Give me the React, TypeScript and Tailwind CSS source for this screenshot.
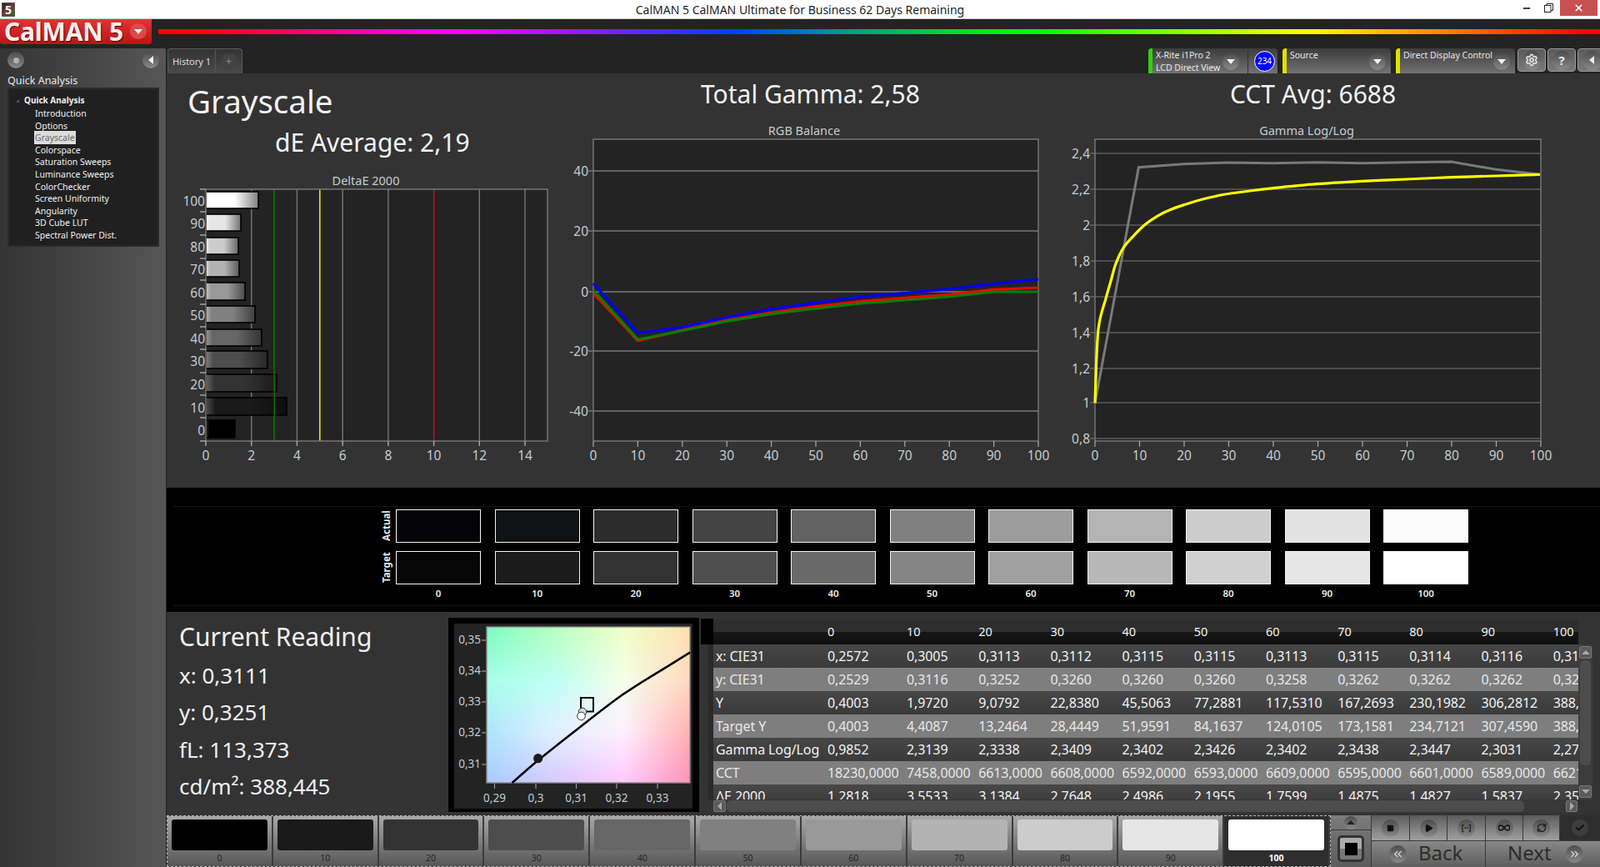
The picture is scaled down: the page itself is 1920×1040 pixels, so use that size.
import React, { ReactNode } from "react";
import { Check, ChevronsLeft, ChevronsRight, Minus, Play, RefreshCw, Settings, Square, X } from "lucide-react";

const levels = [0, 10, 20, 30, 40, 50, 60, 70, 80, 90, 100];
const fullGray = ["#000000", "#1a1a1a", "#333333", "#4d4d4d", "#666666", "#808080", "#999999", "#b3b3b3", "#cccccc", "#e6e6e6", "#ffffff"];
const actual = ["#040406", "#111214", "#2c2c2c", "#444444", "#626262", "#808080", "#9c9c9c", "#b4b4b4", "#cdcdcd", "#e2e2e2", "#fbfbfb"];
const target = ["#060606", "#1c1c1c", "#333333", "#4f4f4f", "#6a6a6a", "#848484", "#a0a0a0", "#b8b8b8", "#d0d0d0", "#e6e6e6", "#ffffff"];

const treeItems = ["Introduction", "Options", "Grayscale", "Colorspace", "Saturation Sweeps", "Luminance Sweeps", "ColorChecker", "Screen Uniformity", "Angularity", "3D Cube LUT", "Spectral Power Dist."];

const tableRows = [
	["x: CIE31", "0,2572", "0,3005", "0,3113", "0,3112", "0,3115", "0,3115", "0,3113", "0,3115", "0,3114", "0,3116", "0,3111"],
	["y: CIE31", "0,2529", "0,3116", "0,3252", "0,3260", "0,3260", "0,3260", "0,3258", "0,3262", "0,3262", "0,3262", "0,3251"],
	["Y", "0,4003", "1,9720", "9,0792", "22,8380", "45,5063", "77,2881", "117,5310", "167,2693", "230,1982", "306,2812", "388,4450"],
	["Target Y", "0,4003", "4,4087", "13,2464", "28,4449", "51,9591", "84,1637", "124,0105", "173,1581", "234,7121", "307,4590", "388,4450"],
	["Gamma Log/Log", "0,9852", "2,3139", "2,3338", "2,3409", "2,3402", "2,3426", "2,3402", "2,3438", "2,3447", "2,3031", "2,2765"],
	["CCT", "18230,0000", "7458,0000", "6613,0000", "6608,0000", "6592,0000", "6593,0000", "6609,0000", "6595,0000", "6601,0000", "6589,0000", "6621,0000"],
	["ΔE 2000", "1,2818", "3,5533", "3,1384", "2,7648", "2,4986", "2,1955", "1,7599", "1,4875", "1,4827", "1,5837", "2,3500"],
];

// bar end x and top/bottom in page px, from 100 down to 0
const deltaBars = [
	[310, 230, 250],
	[289, 257, 277],
	[286, 285, 305],
	[287, 312, 332],
	[294, 339, 360],
	[306, 367, 387],
	[314, 395, 415],
	[321, 421, 442],
	[332, 449, 470],
	[344, 477, 498],
	[282, 504, 525],
];

const labelFill = "#c4ccd0";

const mix = (hex: string, k: number, add = 0) => {
	const v = parseInt(hex.slice(1, 3), 16);
	const n = Math.min(255, Math.round(v * k + add));
	return `rgb(${n},${n},${n})`;
};

// catmull-rom through the points, so curves read by eye don't show kinks
const smooth = (p: number[][]) => {
	let d = `M${p[0][0]} ${p[0][1]}`;
	for (let i = 0; i < p.length - 1; i++) {
		const a = p[Math.max(0, i - 1)];
		const b = p[i];
		const c = p[i + 1];
		const e = p[Math.min(p.length - 1, i + 2)];
		const c1 = [b[0] + (c[0] - a[0]) / 6, b[1] + (c[1] - a[1]) / 6];
		const c2 = [c[0] - (e[0] - b[0]) / 6, c[1] - (e[1] - b[1]) / 6];
		d += `C${c1[0].toFixed(1)} ${c1[1].toFixed(1)} ${c2[0].toFixed(1)} ${c2[1].toFixed(1)} ${c[0].toFixed(1)} ${c[1].toFixed(1)}`;
	}
	return d;
};

function DeltaChart() {
	const xAt = (v: number) => 247 + v * 27.36;
	const tickY = [227, 254, 282, 310, 336, 365, 392, 419, 447, 474, 501, 529];
	return (
		<svg className="absolute left-[200px] top-[200px]" width={480} height={370} viewBox="200 200 480 370">
			<defs>
				{fullGray.map((c, i) => (
					<linearGradient key={i} id={`bar${i}`} x1="0" x2="1" y1="0" y2="0">
						<stop offset="0" stopColor={mix(c, 1, 50)} />
						<stop offset="0.12" stopColor={c} />
						<stop offset="0.55" stopColor={c} />
						<stop offset="1" stopColor={mix(c, 0.5)} />
					</linearGradient>
				))}
			</defs>
			<text x="439" y="222" textAnchor="middle" fontSize="14.5" fill={labelFill}>DeltaE 2000</text>
			<rect x="247" y="227" width="410" height="302" fill="#232323" />
			{[2, 4, 6, 8, 12, 14].map((v) => (
				<line key={v} x1={xAt(v)} x2={xAt(v)} y1="227" y2="529" stroke="#777" strokeWidth="1.4" />
			))}
			{deltaBars.map((b, i) => (
				<rect key={i} x="247" y={b[1]} width={b[0] - 247} height={b[2] - b[1]} fill={`url(#bar${10 - i})`} stroke="#000" strokeWidth="1.6" />
			))}
			<line x1={xAt(3)} x2={xAt(3)} y1="227" y2="529" stroke="#008000" strokeWidth="1.4" />
			<line x1={xAt(5)} x2={xAt(5)} y1="227" y2="529" stroke="#ffff00" strokeWidth="1.4" />
			<line x1={xAt(10)} x2={xAt(10)} y1="227" y2="529" stroke="#ff0000" strokeWidth="1.4" />
			<rect x="247" y="227" width="410" height="302" fill="none" stroke="#7a7a7a" strokeWidth="1.4" />
			{tickY.map((y) => (
				<line key={y} x1="240" x2="247" y1={y} y2={y} stroke="#aaa" strokeWidth="1.4" />
			))}
			{[100, 90, 80, 70, 60, 50, 40, 30, 20, 10, 0].map((v, i) => (
				<text key={v} x="246" y={(deltaBars[i][1] + deltaBars[i][2]) / 2 + 7} textAnchor="end" fontSize="15.5" fill={labelFill}>{v}</text>
			))}
			{[0, 2, 4, 6, 8, 10, 12, 14].map((v) => (
				<g key={v}>
					<line x1={xAt(v)} x2={xAt(v)} y1="529" y2="535" stroke="#aaa" strokeWidth="1.4" />
					<text x={xAt(v)} y="552" textAnchor="middle" fontSize="15.5" fill={labelFill}>{v}</text>
				</g>
			))}
		</svg>
	);
}

function XAxis100({ left, right }: { left: number; right: number }) {
	const step = (right - left) / 10;
	return (
		<>
			{levels.map((v, i) => (
				<g key={v}>
					<line x1={left + i * step} x2={left + i * step} y1="529" y2="536" stroke="#aaa" strokeWidth="1.2" />
					<text x={left + i * step} y="552" textAnchor="middle" fontSize="15.5" fill={labelFill}>{v}</text>
				</g>
			))}
		</>
	);
}

function BalanceChart() {
	const line = (pts: number[]) =>
		pts.map((z, i) => `${712 + (i * 534) / 10},${(150 + z / 3).toFixed(1)}`).join(" ");
	const grid: [number, string][] = [[205, "40"], [277, "20"], [350, "0"], [421, "-20"], [493, "-40"]];
	return (
		<svg className="absolute left-[680px] top-[140px]" width={600} height={430} viewBox="680 140 600 430">
			<text x="965" y="162" textAnchor="middle" fontSize="14.5" fill={labelFill}>RGB Balance</text>
			<rect x="712" y="167" width="534" height="362" fill="#232323" stroke="#7a7a7a" strokeWidth="1.4" />
			{grid.map(([y, t]) => (
				<g key={t}>
					<line x1="706" x2="1246" y1={y} y2={y} stroke="#7a7a7a" strokeWidth="1.4" />
					<text x="706" y={y + 6} textAnchor="end" fontSize="15.5" fill={labelFill}>{t}</text>
				</g>
			))}
			<polyline points={line([605, 776, 738, 703, 675, 653, 635, 622, 610, 592, 585])} fill="none" stroke="#ff0000" strokeWidth="3.2" />
			<polyline points={line([595, 772, 740, 706, 680, 660, 642, 630, 618, 600, 600])} fill="none" stroke="#008000" strokeWidth="3.2" />
			<polyline points={line([570, 748, 728, 692, 662, 640, 618, 605, 590, 572, 555])} fill="none" stroke="#0000ff" strokeWidth="3.2" />
			<XAxis100 left={712} right={1246} />
		</svg>
	);
}

function GammaChart() {
	const toPage = (pts: number[][]) =>
		pts.map(([x, y]) => [1270 + x / 2.613, 150 + y / 3]);
	const grid: [number, string][] = [[184, "2,4"], [227, "2,2"], [270, "2"], [313, "1,8"], [356, "1,6"], [399, "1,4"], [442, "1,2"], [483, "1"], [526, "0,8"]];
	const gray = [[115, 1000], [252, 152], [393, 140], [533, 135], [673, 137], [812, 134], [952, 137], [1092, 134], [1232, 132], [1372, 160], [1510, 178]];
	const yellow = [[115, 1000], [125, 740], [150, 620], [165, 560], [180, 500], [205, 440], [235, 400], [270, 360], [310, 328], [350, 305], [400, 285], [450, 268], [520, 250], [600, 237], [673, 227], [810, 212], [950, 202], [1092, 195], [1232, 188], [1372, 183], [1510, 178]];
	return (
		<svg className="absolute left-[1270px] top-[140px]" width={620} height={430} viewBox="1270 140 620 430">
			<text x="1568" y="162" textAnchor="middle" fontSize="14.5" fill={labelFill}>Gamma Log/Log</text>
			<rect x="1314" y="167" width="535" height="362" fill="#232323" stroke="#7a7a7a" strokeWidth="1.4" />
			{grid.map(([y, t]) => (
				<g key={t}>
					<line x1="1308" x2="1849" y1={y} y2={y} stroke="#7a7a7a" strokeWidth="1.2" />
					<text x="1308" y={y + 6} textAnchor="end" fontSize="15.5" fill={labelFill}>{t}</text>
				</g>
			))}
			<polyline points={toPage(gray).map((p) => p.map((n) => n.toFixed(1)).join(",")).join(" ")} fill="none" stroke="#7a7a7a" strokeWidth="3" />
			<path d={smooth(toPage(yellow))} fill="none" stroke="#ffff00" strokeWidth="3.2" />
			<XAxis100 left={1314} right={1849} />
		</svg>
	);
}

// colour field of the CIE plot, bilinear between hand picked control points
const cie = [
	[[125, 252, 192], [184, 255, 192], [240, 255, 200], [255, 224, 176]],
	[[170, 255, 232], [190, 255, 245], [245, 255, 232], [255, 216, 192]],
	[[176, 228, 255], [226, 240, 255], [255, 240, 255], [255, 176, 176]],
	[[168, 204, 255], [216, 200, 255], [255, 200, 255], [255, 144, 184]],
];

const cieAt = (u: number, v: number) => {
	const fx = u * 3;
	const fy = v * 3;
	const ix = Math.min(2, Math.floor(fx));
	const iy = Math.min(2, Math.floor(fy));
	const tx = fx - ix;
	const ty = fy - iy;
	const ch = [0, 1, 2].map((k) =>
		Math.round(
			cie[iy][ix][k] * (1 - tx) * (1 - ty) + cie[iy][ix + 1][k] * tx * (1 - ty) + cie[iy + 1][ix][k] * (1 - tx) * ty + cie[iy + 1][ix + 1][k] * tx * ty,
		),
	);
	return `rgb(${ch.join(",")})`;
};

function CiePlot() {
	const cells: ReactNode[] = [];
	for (let y = 0; y < 187; y += 3) {
		for (let x = 0; x < 244; x += 3) {
			cells.push(<rect key={`${x}-${y}`} x={584 + x} y={752 + y} width={Math.min(3.4, 244 - x)} height={Math.min(3.4, 187 - y)} fill={cieAt(x / 244, y / 187)} />);
		}
	}
	const yTicks: [number, string][] = [[768, "0,35"], [805, "0,34"], [842, "0,33"], [879, "0,32"], [917, "0,31"]];
	const xTicks: [number, string][] = [[593.5, "0,29"], [643, "0,3"], [691.6, "0,31"], [740, "0,32"], [789, "0,33"]];
	const locus = [[614.6, 939], [646.1, 911.7], [696.6, 871.7], [747.1, 833.3], [789.2, 806.7], [828, 782.7]];
	return (
		<div className="absolute left-[538px] top-[741px] h-[233px] w-[301px] bg-black">
			<svg className="absolute left-0 top-0" width={301} height={233} viewBox="538 741 301 233">
				<rect x="545" y="748" width="286" height="222" fill="#232323" />
				{cells}
				<rect x="584" y="752" width="244" height="187" fill="none" stroke="#8a8a8a" strokeWidth="1.4" />
				{yTicks.map(([y, t]) => (
					<g key={t}>
						<line x1="578" x2="583" y1={y} y2={y} stroke="#aaa" />
						<text x="577" y={y + 4} textAnchor="end" fontSize="13.5" fill={labelFill}>{t}</text>
					</g>
				))}
				{xTicks.map(([x, t]) => (
					<g key={t}>
						<line x1={x} x2={x} y1="940" y2="946" stroke="#aaa" />
						<text x={x} y="962" textAnchor="middle" fontSize="13.5" fill={labelFill}>{t}</text>
					</g>
				))}
				<path d={smooth(locus)} fill="none" stroke="#000" strokeWidth="2.6" />
				<circle cx="645.7" cy="909.7" r="5.6" fill="#1c1c1c" />
				<rect x="697" y="837" width="15" height="16.5" fill="none" stroke="#000" strokeWidth="2" />
				<circle cx="699" cy="854" r="4.8" fill="#d8d8d8" stroke="#333" />
				<circle cx="697.5" cy="859" r="4.8" fill="#fff" stroke="#333" />
			</svg>
		</div>
	);
}

function Knob({ size = "h-[21px] w-[21px]", children }: { size?: string; children?: ReactNode }) {
	return (
		<div className={`flex items-center justify-center rounded-full bg-[linear-gradient(180deg,#4c4c4c,#8a8a8a)] text-[#d8d8d8] ${size}`}>
			{children}
		</div>
	);
}

function DownTri() {
	return (
		<svg width="10" height="6" viewBox="0 0 10 6">
			<path d="M0 0h10L5 6z" fill="#f2f2f2" />
		</svg>
	);
}

function Selector({ left, width, color, lines, knobAt }: { left: string; width: string; color: string; lines: string[]; knobAt: string }) {
	return (
		<div className={`absolute top-[58px] h-[30px] rounded-t-[4px] bg-[linear-gradient(180deg,#3c3c3c,#727272)] ${left} ${width}`}>
			<div className={`absolute bottom-0 left-0 top-0 w-[5px] rounded-tl-[4px] ${color}`} />
			<div className="absolute left-[9px] top-[1px] whitespace-nowrap text-[10.5px] leading-[14.5px] text-[#e8e8e8]">
				{lines.map((l) => (
					<div key={l}>{l}</div>
				))}
			</div>
			<div className={`absolute top-[6px] ${knobAt}`}>
				<Knob size="h-[20px] w-[20px]"><DownTri /></Knob>
			</div>
		</div>
	);
}

function Square3D({ left, children }: { left: string; children: ReactNode }) {
	return (
		<div className={`absolute top-[58px] flex h-[28px] w-[34px] items-center justify-center rounded-[4px] border border-[#9a9a9a] bg-[linear-gradient(180deg,#5a5a5a,#7a7a7a)] ${left}`}>
			<Knob size="h-[23px] w-[23px]">{children}</Knob>
		</div>
	);
}

function Header() {
	return (
		<>
			<div className="relative flex h-[23px] items-center justify-center border-b border-[#c8c8c8] bg-white">
				<div className="absolute left-[2px] top-[3px] flex h-[17px] w-[16px] items-center justify-center border border-[#555] bg-[linear-gradient(135deg,#222,#733,#272)] text-[14px] font-bold leading-none text-white">5</div>
				<span className="text-[14px] text-[#222]">CalMAN 5 CalMAN Ultimate for Business 62 Days Remaining</span>
				<Minus className="absolute left-[1826px] top-[4px] text-black" size={12} strokeWidth={3} />
				<svg className="absolute left-[1853px] top-[4px]" width="11" height="11" viewBox="0 0 11 11" fill="none" stroke="#222">
					<rect x="0.5" y="2.5" width="7.5" height="8" />
					<path d="M3 2.5V0.5h7.5v8H8" />
				</svg>
				<div className="absolute left-[1872px] top-0 flex h-[19px] w-[45px] items-center justify-center bg-[#c75050]">
					<X className="text-white" size={13} strokeWidth={3} />
				</div>
			</div>
			<div className="absolute left-0 top-[23px] flex h-[30px] w-[182px] items-center rounded-b-[3px] bg-[linear-gradient(180deg,#e23434,#bb1414)] pl-[5px]">
				<span className="font-['Liberation_Sans',sans-serif] text-[30px] font-bold leading-none tracking-[-0.2px] text-[#f4f0f0] [text-shadow:1px_1px_1px_#5a0000]">CalMAN 5</span>
				<div className="absolute left-[156px] top-[5px] flex h-[19px] w-[20px] items-center justify-center rounded-full bg-[#e04848]">
					<DownTri />
				</div>
			</div>
			<div className="absolute left-[190px] top-[35px] h-[6px] w-[1730px] bg-[linear-gradient(90deg,#ff0000_2%,#ff00ff_20.4%,#0040ff_40.2%,#00a080_48%,#00ff00_60.6%,#ffff00_79.7%,#ff0000_99%)]" />
		</>
	);
}

function Sidebar() {
	return (
		<div className="absolute left-0 top-[58px] h-[982px] w-[200px] rounded-tr-[3px] border-r border-[#222] bg-[linear-gradient(90deg,#343434,#565656)]">
			<div className="absolute left-[9px] top-[4px]">
				<Knob size="h-[20px] w-[20px]"><div className="h-[7px] w-[7px] rounded-full bg-[#b0b0b0]" /></Knob>
			</div>
			<div className="absolute left-[171px] top-[4px]">
				<Knob size="h-[20px] w-[20px]">
					<svg width="6" height="10" viewBox="0 0 6 10"><path d="M6 0v10L0 5z" fill="#f2f2f2" /></svg>
				</Knob>
			</div>
			<div className="absolute left-[9px] top-[30px] text-[12.5px] leading-[18px] text-[#e8e8e8]">Quick Analysis</div>
			<div className="absolute left-[9px] top-[47px] h-[191px] w-[182px] border-2 border-[#2a2a2a] bg-[#202020]">
				<div className="absolute left-[18px] top-[5px] text-[10px] font-bold leading-[16px] text-[#f0f0f0]">Quick Analysis</div>
				<div className="absolute left-[8px] top-[12px] h-0 w-0 border-b-[4px] border-l-[4px] border-b-[#555] border-l-transparent" />
				<div className="absolute left-[30px] top-[22px] flex flex-col">
					{treeItems.map((t) => (
						<div key={t} className="h-[14.6px] whitespace-nowrap text-[10.5px] leading-[14.6px] text-[#f0f0f0]">
							<span className={t === "Grayscale" ? "bg-[#dcdcdc] px-[1px] py-[1px] text-[#666]" : "px-[1px]"}>{t}</span>
						</div>
					))}
				</div>
			</div>
		</div>
	);
}

function TopControls() {
	return (
		<>
			<div className="absolute left-[201px] top-[58px] flex h-[30px] w-[90px] rounded-t-[4px] border border-b-0 border-[#5a5a5a] bg-[linear-gradient(180deg,#333,#4a4a4a)] text-[11px] text-[#ddd]">
				<div className="flex w-[57px] items-center justify-center border-r border-[#555] pt-[1px]">History 1</div>
				<div className="flex flex-1 items-center justify-center">
					<div className="flex h-[20px] w-[20px] items-center justify-center rounded-full bg-[#434343] text-[13px] leading-none text-[#8a8a8a]">+</div>
				</div>
			</div>
			<Selector left="left-[1378px]" width="w-[155px]" color="bg-[#30d010]" lines={["X-Rite i1Pro 2", "LCD Direct View"]} knobAt="left-[89px]" />
			<div className="absolute left-[1497px] top-[61px] h-[27px] w-[1px] bg-[#333]" />
			<div className="absolute left-[1505px] top-[61px] flex h-[25px] w-[25px] items-center justify-center rounded-full border border-white bg-[#0000ff] text-[10px] text-white">234</div>
			<Selector left="left-[1539px]" width="w-[130px]" color="bg-[#e0e000]" lines={["Source"]} knobAt="left-[104px]" />
			<Selector left="left-[1675px]" width="w-[143px]" color="bg-[#e0e000]" lines={["Direct Display Control"]} knobAt="left-[117px]" />
			<Square3D left="left-[1821px]"><Settings size={16} strokeWidth={2.8} /></Square3D>
			<Square3D left="left-[1857px]"><span className="text-[15px] font-bold leading-none text-[#e8e8e8]">?</span></Square3D>
			<Square3D left="left-[1893px]">
				<svg width="6" height="10" viewBox="0 0 6 10"><path d="M6 0v10L0 5z" fill="#e8e8e8" /></svg>
			</Square3D>
		</>
	);
}

function Swatches() {
	return (
		<div className="absolute left-[200px] top-[585px] h-[149px] w-[1720px] bg-black">
			<div className="absolute left-[8px] right-0 top-[22px] h-[1px] bg-[#141414]" />
			<div className="absolute left-[8px] right-0 top-[141px] h-[1px] bg-[#141414]" />
			<div className="absolute left-[254px] top-[26px] flex h-[40px] w-[18px] items-center justify-center">
				<span className="-rotate-90 text-[11.5px] font-bold text-[#e8e8e8]">Actual</span>
			</div>
			<div className="absolute left-[254px] top-[76px] flex h-[40px] w-[18px] items-center justify-center">
				<span className="-rotate-90 text-[11.5px] font-bold text-[#e8e8e8]">Target</span>
			</div>
			<div className="absolute left-[275px] top-[26px] flex gap-[16.5px]">
				{levels.map((v, i) => (
					<div key={v} className="flex w-[102px] flex-col items-center">
						<div className="h-[40px] w-full border-[1.5px] border-[#f4f4f4]" style={{ backgroundColor: actual[i] }} />
						<div className="mt-[10px] h-[40px] w-full border-[1.5px] border-[#f4f4f4]" style={{ backgroundColor: target[i] }} />
						<div className="mt-[3px] text-[11.5px] font-semibold leading-[16px] text-[#eee]">{v}</div>
					</div>
				))}
			</div>
		</div>
	);
}

function Reading() {
	return (
		<div className="absolute left-[215px] top-[742px] text-[#f0f0f0]">
			<div className="text-[30px] leading-[44px]">Current Reading</div>
			<div className="mt-[2px] flex flex-col text-[26px]">
				<div className="h-[44.3px] leading-[44.3px]">x: 0,3111</div>
				<div className="h-[44.3px] leading-[44.3px]">y: 0,3251</div>
				<div className="h-[44.3px] leading-[44.3px]">fL: 113,373</div>
				<div className="h-[44.3px] leading-[44.3px]">cd/m²: 388,445</div>
			</div>
		</div>
	);
}

function DataTable() {
	return (
		<>
			<div className="absolute left-[841px] top-[742px] h-[31px] w-[15px] bg-black" />
			<div className="absolute left-[850px] top-[773px] h-[186px] w-[6px] bg-[#2a2a2a]" />
			<div className="absolute left-[856px] top-[743px] h-[216px] w-[1038px] overflow-hidden">
				<div className="grid h-[30px] grid-cols-[137px_95px_repeat(10,86.2px)] items-center bg-[linear-gradient(180deg,#2e2e2e_50%,#161616_50%,#0f0f0f)] text-[14.5px] text-[#f2f2f2]">
					<div />
					{levels.map((v) => (
						<div key={v}>{v}</div>
					))}
				</div>
				{tableRows.map((row, i) => (
					<div
						key={row[0]}
						className={`grid h-[28px] grid-cols-[137px_95px_repeat(10,86.2px)] items-center whitespace-nowrap text-[16px] tracking-[-0.1px] ${i % 2 === 0 ? "bg-[linear-gradient(180deg,#474747,#3a3a3a)] text-[#f2f2f2]" : "bg-[#7e7e7e] text-[#e8e8e8]"}`}
					>
						{row.map((cell, j) => (
							<div key={j} className={j === 0 ? "pl-[3px]" : ""}>{cell}</div>
						))}
					</div>
				))}
			</div>
			{/* vertical scroller */}
			<div className="absolute left-[1894px] top-[773px] h-[186px] w-[17px] bg-[#3c3c3c]">
				<div className="absolute left-[1px] top-[2px] flex h-[15px] w-[15px] items-center justify-center rounded-[2px] border border-[#777] bg-[#5a5a5a]">
					<svg width="10" height="5" viewBox="0 0 10 5"><path d="M0 5h10L5 0z" fill="#aaa" /></svg>
				</div>
				<div className="absolute left-[2px] top-[19px] h-[126px] w-[13px] rounded-[5px] bg-[#4c4c4c]" />
				<div className="absolute left-[1px] top-[169px] flex h-[15px] w-[15px] items-center justify-center rounded-[2px] border border-[#777] bg-[#5a5a5a]">
					<svg width="10" height="5" viewBox="0 0 10 5"><path d="M0 0h10L5 5z" fill="#aaa" /></svg>
				</div>
			</div>
			{/* horizontal scroller */}
			<div className="absolute left-[856px] top-[959px] h-[16px] w-[1038px] bg-[#383838]">
				<div className="absolute left-0 top-[1px] flex h-[14px] w-[15px] items-center justify-center rounded-[2px] border border-[#777] bg-[#5a5a5a]">
					<svg width="5" height="10" viewBox="0 0 5 10"><path d="M5 0v10L0 5z" fill="#aaa" /></svg>
				</div>
				<div className="absolute left-[16px] top-[1px] h-[14px] w-[957px] rounded-[5px] bg-[#4c4c4c]" />
				<div className="absolute left-[1023px] top-[1px] flex h-[14px] w-[14px] items-center justify-center rounded-[2px] border border-[#777] bg-[#5a5a5a]">
					<svg width="5" height="10" viewBox="0 0 5 10"><path d="M0 0v10l5-5z" fill="#aaa" /></svg>
				</div>
			</div>
		</>
	);
}

function ActionCell({ width, children }: { width: string; children: ReactNode }) {
	return (
		<div className={`flex h-full items-center justify-center border-r border-[#3a3a3a] ${width}`}>
			<Knob>{children}</Knob>
		</div>
	);
}

function BottomBar() {
	return (
		<>
			<div className="absolute left-[200px] top-[978px] flex h-[62px] w-[1397px] border border-dashed border-[#b8b8b8]">
				{levels.map((v, i) => {
					const selected = v === 100;
					return (
						<div
							key={v}
							className={`relative h-full flex-1 border-r-2 border-[#3c3c3c] ${selected ? "bg-[#2e2e2e]" : "bg-[linear-gradient(180deg,#a8a8a8,#565656)]"}`}
						>
							<div className="absolute left-[5px] right-[5px] top-[4px] h-[37px] rounded-[3px]" style={{ backgroundColor: fullGray[i] }} />
							<div className={`absolute bottom-[2px] left-0 right-0 text-center text-[10.5px] leading-[16px] ${selected ? "font-bold text-white" : "text-[#262626]"}`}>{v}</div>
						</div>
					);
				})}
			</div>
			<div className="absolute left-[1597px] top-[978px] h-[62px] w-[49px] border-r border-[#3a3a3a] bg-[linear-gradient(180deg,#7c7c7c,#5c5c5c)]">
				<div className="flex h-[18px] items-center justify-center border-b border-[#3a3a3a]">
					<Knob size="h-[16px] w-[16px]">
						<svg width="10" height="5" viewBox="0 0 10 5"><path d="M0 5h10L5 0z" fill="#222" /></svg>
					</Knob>
				</div>
				<div className="absolute left-[8px] top-[24px] flex h-[32px] w-[32px] items-center justify-center rounded-[5px] border-[3px] border-[#333] bg-[linear-gradient(180deg,#aaa_50%,#777_50%)]">
					<div className="h-[15px] w-[15px] bg-black" />
				</div>
			</div>
			<div className="absolute left-[1646px] top-[978px] flex h-[30px] w-[274px] bg-[linear-gradient(180deg,#5c5c5c,#a0a0a0)]">
				<ActionCell width="w-[46px]"><Square size={9} fill="#111" stroke="#111" /></ActionCell>
				<ActionCell width="w-[45px]"><Play size={11} fill="#111" stroke="#111" /></ActionCell>
				<ActionCell width="w-[46px]"><span className="text-[10px] font-bold leading-none text-[#222]">[··]</span></ActionCell>
				<ActionCell width="w-[45px]">
					<svg width="14" height="8" viewBox="0 0 14 8" fill="none" stroke="#111" strokeWidth="1.6">
						<path d="M7 4C5.500 2 4.500 1 3.200 1a3 3 0 0 0 0 6C4.500 7 5.500 6 7 4s2.500-3 3.800-3a3 3 0 0 1 0 6C9.500 7 8.500 6 7 4z" />
					</svg>
				</ActionCell>
				<ActionCell width="w-[44px]"><RefreshCw size={12} strokeWidth={3} className="text-[#222]" /></ActionCell>
				<div className="flex flex-1 items-center justify-center bg-[#2e2e2e]">
					<div className="flex h-[20px] w-[20px] items-center justify-center rounded-full bg-[#3e3e3e]">
						<Check size={12} strokeWidth={4} className="text-[#111]" />
					</div>
				</div>
			</div>
			<div className="absolute left-[1646px] top-[1008px] flex h-[32px] w-[274px] border-t border-[#3a3a3a] bg-[linear-gradient(180deg,#888,#5e5e5e)] text-[24px] leading-[28px] text-[#2c2c2c]">
				<div className="flex w-[137px] items-start border-r border-[#3a3a3a] pl-[21px]">
					<div className="mt-[5px]"><Knob><ChevronsLeft size={15} className="text-[#ddd]" /></Knob></div>
					<span className="ml-[14px]">Back</span>
				</div>
				<div className="flex flex-1 items-start pl-[26px]">
					<span>Next</span>
					<div className="ml-[17px] mt-[5px]">
						<Knob><ChevronsRight size={15} className="text-[#ddd]" /></Knob>
					</div>
				</div>
			</div>
		</>
	);
}

export default function App() {
	return (
		<div className="relative h-[1040px] w-[1920px] overflow-hidden bg-[#232323] font-['Noto_Sans',sans-serif]">
			<Header />
			<div className="absolute left-[200px] top-[88px] h-[952px] w-[1720px] bg-[#333333]" />
			<Sidebar />
			<TopControls />
			<div className="absolute left-[225px] top-[93px] text-[38.5px] leading-[56px] text-[#f2f2f2]">Grayscale</div>
			<div className="absolute left-[330px] top-[150px] text-[30px] leading-[42px] text-[#f2f2f2]">dE Average: 2,19</div>
			<div className="absolute left-[841px] top-[91px] text-[30px] leading-[44px] text-[#f2f2f2]">Total Gamma: 2,58</div>
			<div className="absolute left-[1476px] top-[91px] text-[30px] leading-[44px] text-[#f2f2f2]">CCT Avg: 6688</div>
			<DeltaChart />
			<BalanceChart />
			<GammaChart />
			<Swatches />
			<Reading />
			<CiePlot />
			<DataTable />
			<BottomBar />
		</div>
	);
}
